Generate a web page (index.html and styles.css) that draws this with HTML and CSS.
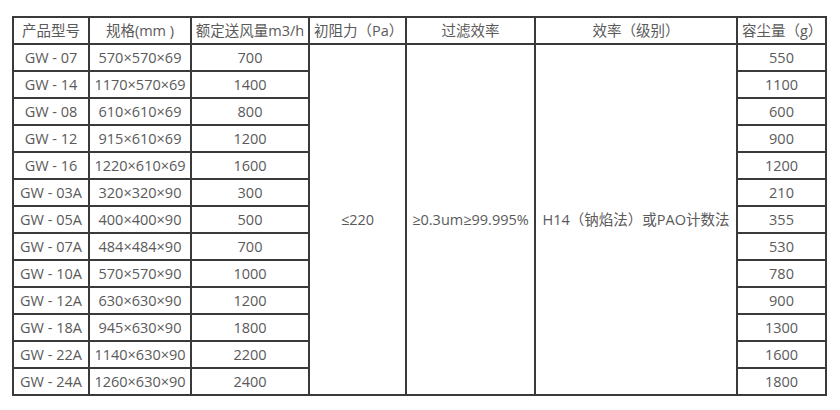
FILE: index.html
```html
<!DOCTYPE html>
<html lang="zh">
<head>
<meta charset="utf-8">
<title>规格表</title>
<link rel="stylesheet" href="styles.css">
</head>
<body>
<table class="spec">
  <colgroup>
    <col class="c1"><col class="c2"><col class="c3"><col class="c4"><col class="c5"><col class="c6"><col class="c7">
  </colgroup>
  <thead>
    <tr><th>产品型号</th><th>规格(mm )</th><th>额定送风量m3/h</th><th class="left">初阻力（Pa）</th><th>过滤效率</th><th>效率（级别）</th><th class="left">容尘量（g）</th></tr>
  </thead>
  <tbody>
    <tr><td>GW - 07</td><td>570×570×69</td><td>700</td><td rowspan="13">≤220</td><td rowspan="13">≥0.3um≥99.995%</td><td rowspan="13">H14（钠焰法）或PAO计数法</td><td>550</td></tr>
    <tr><td>GW - 14</td><td>1170×570×69</td><td>1400</td><td>1100</td></tr>
    <tr><td>GW - 08</td><td>610×610×69</td><td>800</td><td>600</td></tr>
    <tr><td>GW - 12</td><td>915×610×69</td><td>1200</td><td>900</td></tr>
    <tr><td>GW - 16</td><td>1220×610×69</td><td>1600</td><td>1200</td></tr>
    <tr><td>GW - 03A</td><td>320×320×90</td><td>300</td><td>210</td></tr>
    <tr><td>GW - 05A</td><td>400×400×90</td><td>500</td><td>355</td></tr>
    <tr><td>GW - 07A</td><td>484×484×90</td><td>700</td><td>530</td></tr>
    <tr><td>GW - 10A</td><td>570×570×90</td><td>1000</td><td>780</td></tr>
    <tr><td>GW - 12A</td><td>630×630×90</td><td>1200</td><td>900</td></tr>
    <tr><td>GW - 18A</td><td>945×630×90</td><td>1800</td><td>1300</td></tr>
    <tr><td>GW - 22A</td><td>1140×630×90</td><td>2200</td><td>1600</td></tr>
    <tr><td>GW - 24A</td><td>1260×630×90</td><td>2400</td><td>1800</td></tr>
  </tbody>
</table>
</body>
</html>
```
FILE: styles.css
```css
html, body {
  margin: 0;
  padding: 0;
  background: #ffffff;
}
body {
  padding: 16px 0 0 12px;
  font-family: "Open Sans", "Noto Sans CJK SC", sans-serif;
  font-size: 14.5px;
  color: #5a5a5a;
}
.spec {
  border-collapse: collapse;
  table-layout: fixed;
  width: 815px;
}
.c1 { width: 76px; }
.c2 { width: 102px; }
.c3 { width: 118px; }
.c4 { width: 97px; }
.c5 { width: 129px; }
.c6 { width: 202px; }
.c7 { width: 89px; }
.spec th, .spec td {
  border: 2px solid #3a3a3a;
  height: 27px;
  padding: 0;
  text-align: center;
  vertical-align: middle;
  font-weight: normal;
  white-space: nowrap;
  overflow: hidden;
  line-height: 20px;
  box-sizing: border-box;
}
.spec th.left {
  text-align: left;
  padding-left: 4px;
}
```
